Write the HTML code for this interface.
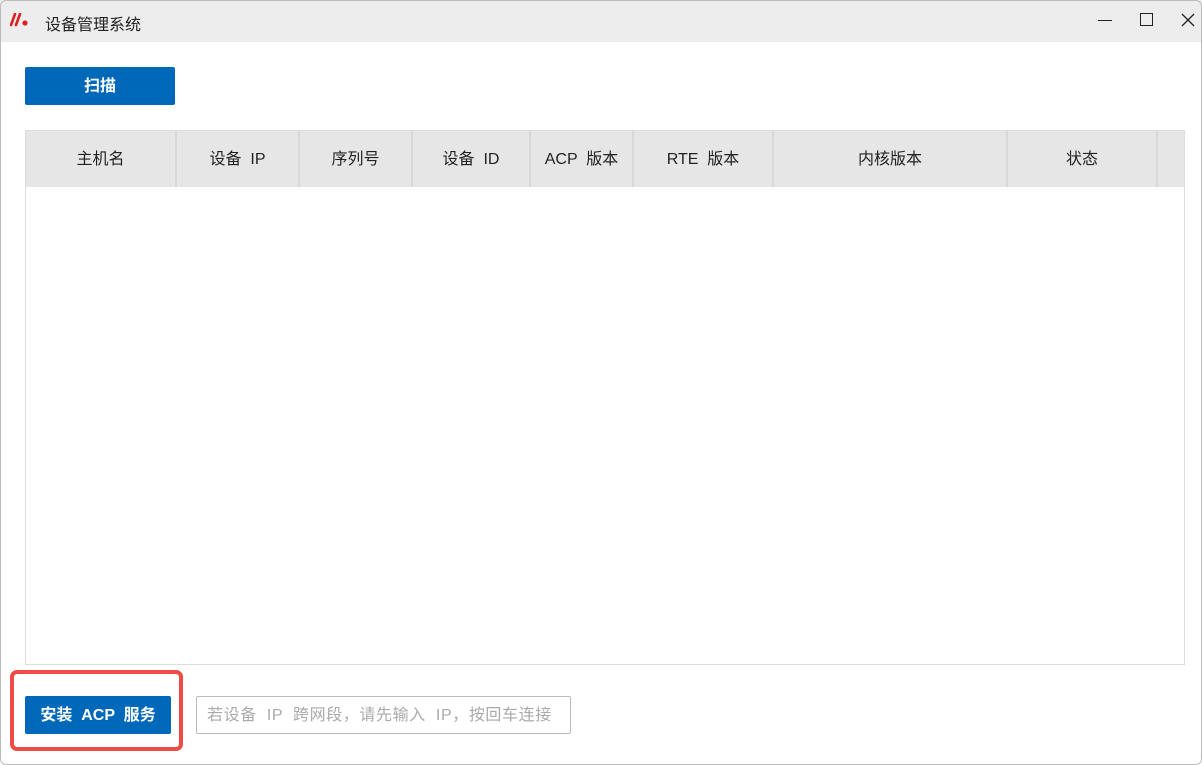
<!DOCTYPE html>
<html><head><meta charset="utf-8"><style>
*{margin:0;padding:0;box-sizing:border-box}
body{width:1202px;height:765px;background:#fff;font-family:"Liberation Sans","Noto Sans CJK SC",sans-serif;position:relative;overflow:hidden}
.frame{position:absolute;left:0;top:0;width:1202px;height:765px;border:1px solid #bbb;border-radius:6px;pointer-events:none}
.title{position:absolute;left:0;top:0;width:1202px;height:42px;background:#ededed}
.title .t{position:absolute;left:45px;top:11px;font-size:16px;color:#222}
.btn{position:absolute;background:#0068b8;color:#fff;font-weight:bold;font-size:16px;text-align:center;border-radius:2px;white-space:pre;padding-top:2px}
.table{position:absolute;left:25px;top:130px;width:1160px;height:535px;border:1px solid #ddd}
.hdr{position:absolute;left:0;top:0;height:56px;width:1158px;background:#e6e6e6}
.c{position:absolute;top:0;height:56px;line-height:58px;text-align:center;font-size:16px;color:#222;border-right:2px solid #d8d8d8;white-space:pre}
</style></head><body>
<div class="title">
<svg style="position:absolute;left:10px;top:13px" width="22" height="14" viewBox="0 0 22 14"><path d="M5 1 L1 12 M10 1 L6 12" stroke="#e02020" stroke-width="2.6" stroke-linecap="round"/><circle cx="15" cy="10" r="2.6" fill="#e02020"/></svg>
<div class="t">设备管理系统</div>
<div style="position:absolute;left:1098px;top:20px;width:14px;height:1px;background:#222"></div>
<div style="position:absolute;left:1140px;top:13px;width:13px;height:13px;border:1.3px solid #222"></div>
<svg style="position:absolute;left:1181px;top:13px" width="14" height="14"><path d="M1 1L13 13M13 1L1 13" stroke="#222" stroke-width="1.3"/></svg>
</div>
<div class="btn" style="left:25px;top:67px;width:150px;height:38px;line-height:36px">扫描</div>
<div class="table"><div class="hdr">
<div class="c" style="left:0;width:151px">主机名</div>
<div class="c" style="left:151px;width:123px">设备  IP</div>
<div class="c" style="left:274px;width:113px">序列号</div>
<div class="c" style="left:387px;width:118px">设备  ID</div>
<div class="c" style="left:505px;width:103px">ACP  版本</div>
<div class="c" style="left:608px;width:140px">RTE  版本</div>
<div class="c" style="left:748px;width:234px">内核版本</div>
<div class="c" style="left:982px;width:150px">状态</div>
</div></div>
<div style="position:absolute;left:10px;top:670px;width:173px;height:81px;border:4px solid #f04a45;border-radius:7px"></div>
<div class="btn" style="left:25px;top:696px;width:146px;height:38px;line-height:36px">安装  ACP  服务</div>
<div style="position:absolute;left:196px;top:696px;width:375px;height:38px;border:1px solid #bbb;border-radius:2px;font-size:16px;color:#aaa;line-height:38px;padding-left:10px;white-space:pre;letter-spacing:0.6px">若设备  IP  跨网段，请先输入  IP，按回车连接</div>
<div class="frame"></div>
</body></html>
